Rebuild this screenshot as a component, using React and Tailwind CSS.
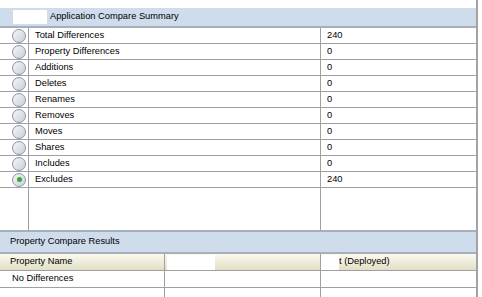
import React from "react";

const rows = [
  ["Total Differences", "240"],
  ["Property Differences", "0"],
  ["Additions", "0"],
  ["Deletes", "0"],
  ["Renames", "0"],
  ["Removes", "0"],
  ["Moves", "0"],
  ["Shares", "0"],
  ["Includes", "0"],
  ["Excludes", "240", true],
];

const Radio = ({ checked }) => (
  <div className="w-[14px] h-[14px] rounded-full border border-[#8a96a3] bg-gradient-to-br from-[#f4f6f8] to-[#c9d1da] flex items-center justify-center">
    {checked && <div className="w-[5px] h-[5px] rounded-full bg-[#3aa83a]" />}
  </div>
);

const App = () => {
  return (
    <div className="w-[482px] h-[297px] bg-white overflow-hidden text-[9.3px] text-black" style={{ fontFamily: "'Liberation Sans', Arial, sans-serif" }}>
      <div className="w-[478px] border-r-2 border-[#a3a3a3] pt-[8px]">
        <div className="h-[20px] bg-[#cfdcec] border-b-2 border-[#a7b0ba] flex items-center">
          <div className="ml-[13px] w-[34px] h-[14px] bg-white" />
          <span className="ml-[3px]">Application Compare Summary</span>
        </div>

        <div className="flex flex-col">
          {rows.map(([label, value, checked]) => (
            <div key={label} className="flex h-[16px] border-b border-[#a0a0a0]">
              <div className="w-[29px] flex items-center pl-[12px] border-r border-[#a0a0a0]">
                <Radio checked={checked} />
              </div>
              <div className="w-[292px] pl-[6px] flex items-center border-r border-[#a0a0a0]">{label}</div>
              <div className="flex-1 pl-[6px] flex items-center">{value}</div>
            </div>
          ))}
          <div className="flex h-[44px] border-b-2 border-[#a7b0ba]">
            <div className="w-[29px] border-r border-[#a0a0a0]" />
            <div className="w-[292px] border-r border-[#a0a0a0]" />
            <div className="flex-1" />
          </div>
        </div>

        <div className="h-[22px] bg-[#cfdcec] border-b-2 border-[#a7b0ba] flex items-center pl-[10px]">
          Property Compare Results
        </div>
        <div className="flex h-[17px] bg-gradient-to-b from-[#fbfaef] to-[#e2dfc6] border-b border-[#a0a0a0]">
          <div className="w-[165px] pl-[10px] flex items-center border-r border-[#a0a0a0]">Property Name</div>
          <div className="w-[156px] flex items-center border-r border-[#a0a0a0]">
            <div className="ml-[2px] w-[48px] h-[15px] bg-white" />
          </div>
          <div className="flex-1 flex items-center">
            <div className="w-[18px] h-[15px] bg-white" />
            <span>t (Deployed)</span>
          </div>
        </div>
        <div className="flex h-[17px] border-b border-[#a0a0a0]">
          <div className="w-[165px] pl-[12px] flex items-center border-r border-[#a0a0a0]">No Differences</div>
          <div className="w-[156px] border-r border-[#a0a0a0]" />
          <div className="flex-1" />
        </div>
        <div className="flex h-[17px]">
          <div className="w-[165px] border-r border-[#a0a0a0]" />
          <div className="w-[156px] border-r border-[#a0a0a0]" />
          <div className="flex-1" />
        </div>
      </div>
    </div>
  );
};

export default App;
